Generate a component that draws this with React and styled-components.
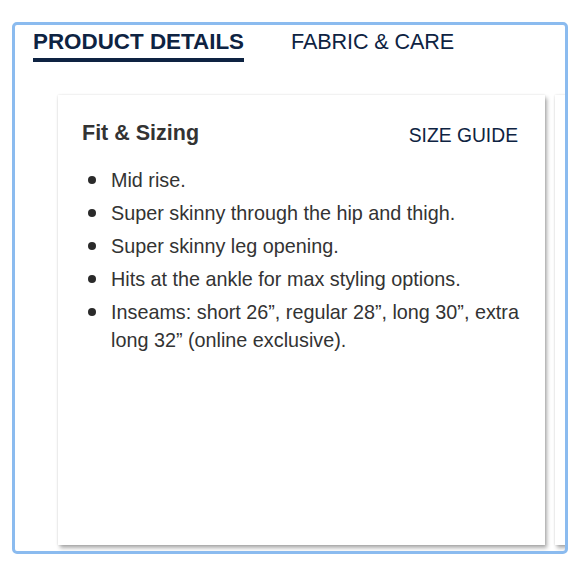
import React from 'react'
import styled, { createGlobalStyle } from 'styled-components'

const GlobalStyle = createGlobalStyle`
  body {
    margin: 0;
    background: #fff;
    font-family: "Liberation Sans", Arial, Helvetica, sans-serif;
  }
`;

const Page = styled.div`
  padding: 22px 12px 0 12px;
`;

const Frame = styled.div`
  box-sizing: border-box;
  width: 556px;
  height: 532px;
  border: 3px solid #8bbbef;
  border-radius: 5px;
  overflow: hidden;
  display: flex;
  flex-direction: column;
`;

const Tabs = styled.div`
  display: flex;
  gap: 47px;
  padding: 4px 0 0 18px;
`;

const Tab = styled.div`
  font-size: ${props => (props.active ? '22.4px' : '21.6px')};
  line-height: 25px;
  color: #0e2342;
  font-weight: ${props => (props.active ? 700 : 400)};
  letter-spacing: ${props => (props.active ? '0' : '-0.1px')};
  padding-bottom: 4px;
  border-bottom: 4px solid ${props => (props.active ? '#0e2342' : 'transparent')};
`;

const Carousel = styled.div`
  display: flex;
  gap: 10px;
  padding: 33px 0 0 43px;
`;

const Card = styled.div`
  flex: 0 0 auto;
  box-sizing: border-box;
  width: 487px;
  height: 450px;
  background: #fff;
  padding: 26px 20px 0 24px;
  box-shadow: 0 0 2px rgba(0, 0, 0, 0.12), 2px 3px 4px rgba(0, 0, 0, 0.32);
`;

const CardHead = styled.div`
  display: flex;
  justify-content: space-between;
  align-items: baseline;
  padding-right: 7px;
`;

const CardTitle = styled.h3`
  margin: 0;
  font-size: 21.5px;
  font-weight: 700;
  color: #333;
  line-height: 24px;
`;

const GuideLink = styled.a`
  font-size: 19.3px;
  color: #0e2342;
  text-decoration: none;
  position: relative;
  top: 2px;
`;

const List = styled.ul`
  margin: 0;
  padding: 21px 0 0 0;
  list-style: none;
`;

const Item = styled.li`
  position: relative;
  padding-left: 29px;
  font-size: 19.8px;
  line-height: 28px;
  color: #333;
  margin-bottom: 5px;

  &::before {
    content: '';
    position: absolute;
    left: 6px;
    top: 10px;
    width: 8px;
    height: 8px;
    border-radius: 50%;
    background: #2a2a2a;
  }
`;

const items = [
  'Mid rise.',
  'Super skinny through the hip and thigh.',
  'Super skinny leg opening.',
  'Hits at the ankle for max styling options.',
  'Inseams: short 26\u201d, regular 28\u201d, long 30\u201d, extra long 32\u201d (online exclusive).',
];

export default function App() {
  return (
    <Page>
      <GlobalStyle />
      <Frame>
        <Tabs>
          <Tab active>PRODUCT DETAILS</Tab>
          <Tab>FABRIC &amp; CARE</Tab>
        </Tabs>
        <Carousel>
          <Card>
            <CardHead>
              <CardTitle>Fit &amp; Sizing</CardTitle>
              <GuideLink href="#">SIZE GUIDE</GuideLink>
            </CardHead>
            <List>
              {items.map(text => (
                <Item key={text}>{text}</Item>
              ))}
            </List>
          </Card>
          <Card />
        </Carousel>
      </Frame>
    </Page>
  )
}
